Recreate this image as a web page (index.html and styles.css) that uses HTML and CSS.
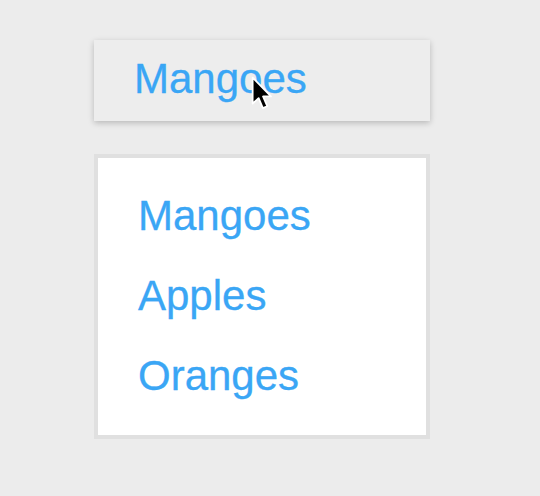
FILE: index.html
```html
<!DOCTYPE html>
<html lang="en">
<head>
  <meta charset="UTF-8">
  <meta name="viewport" content="width=device-width, initial-scale=1.0">
  <title>Dropdown</title>
  <link rel="stylesheet" href="styles.css">
</head>
<body>
  <div class="dropdown">
    <div class="selected">
      <span>Mangoes</span>
      <!-- mouse pointer over the selected value -->
      <svg class="cursor" width="26" height="38" viewBox="0 0 16 23.4">
        <path d="M1 1 L1 17 L4.7 13.6 L7.3 19.8 L10 18.6 L7.4 12.6 L12.3 12.6 Z" fill="#000" stroke="#fff" stroke-width="1.1" stroke-linejoin="round"/>
      </svg>
    </div>
    <ul class="options">
      <li>Mangoes</li>
      <li>Apples</li>
      <li>Oranges</li>
    </ul>
  </div>
</body>
</html>
```

FILE: styles.css
```css
* { box-sizing: border-box; }
body { margin: 0; background: #ececec; font-family: 'Liberation Sans', Arial, sans-serif; color: #3aa6f5; }
.dropdown { width: 336px; margin: 40px 0 0 94px; }
.selected { position: relative; height: 81px; padding: 15px 0 0 40px; background: #ededed; box-shadow: 0 2px 6px rgba(0,0,0,0.22); font-size: 42px; line-height: 48px; -webkit-text-stroke: 0.3px #3aa6f5; }
.cursor { position: absolute; left: 157px; top: 36px; }
.options { list-style: none; margin: 33px 0 0; padding: 18px 0 19px 40px; background: #fff; border: 4px solid #e0e0e0; }
.options li { font-size: 42px; line-height: 48px; padding: 16px 0; -webkit-text-stroke: 0.3px #3aa6f5; }
```
